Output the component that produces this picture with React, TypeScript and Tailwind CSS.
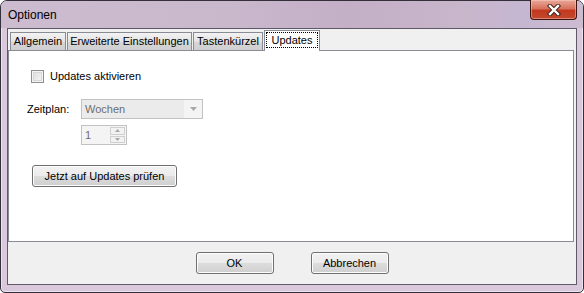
import React from 'react';

const font = "font-['Liberation_Sans',Arial,sans-serif]";

function WinButton({ children, className = '' }: { children: React.ReactNode; className?: string }) {
  return (
    <div
      className={`flex items-center justify-center rounded-[3px] border border-[#707070] bg-[linear-gradient(#f2f2f2_0%,#ebebeb_50%,#dddddd_50%,#cfcfcf_100%)] text-[11px] text-black shadow-[inset_0_0_0_1px_#fcfcfc] ${className}`}
    >
      {children}
    </div>
  );
}

function Tab({ label, width }: { label: string; width: number }) {
  return (
    <div
      style={{ width }}
      className="flex h-[18px] items-center justify-center border border-b-0 border-[#898c95] bg-[linear-gradient(#f3f3f3,#e3e3e3_50%,#d6d6d6_51%,#cfcfcf)] text-[11px] text-black"
    >
      {label}
    </div>
  );
}

function CloseButton() {
  return (
    <div className="-mt-[1px] flex h-[20px] w-[47px] items-center justify-center rounded-b-[4px] border border-t-0 border-[#3e1410] bg-[linear-gradient(#e9a99a_0%,#d7725c_45%,#c2391f_55%,#c4482c_100%)] shadow-[inset_0_0_0_1px_rgba(255,210,200,0.45)]">
      <svg width="14" height="12" viewBox="0 0 14 12">
        <path d="M3 2 L11 10 M11 2 L3 10" stroke="#40221c" strokeWidth="4.4" strokeLinecap="square" />
        <path d="M3 2 L11 10 M11 2 L3 10" stroke="#ffffff" strokeWidth="2.4" strokeLinecap="square" />
      </svg>
    </div>
  );
}

export default function App() {
  return (
    <div
      className={`${font} flex h-[293px] w-[584px] flex-col rounded-t-[7px] rounded-b-[5px] border border-[#34303a] bg-[#dac8dd] px-[6px] shadow-[inset_0_0_0_1px_#efe3f0]`}
    >
      {/* title bar */}
      <div className="-mx-[6px] flex h-[27px] shrink-0 items-start justify-between rounded-t-[6px] bg-[linear-gradient(90deg,#cdbbd0_0%,#c9b7cc_40%,#c3afc6_60%,#c8b6cb_80%,#c5b7d2_90%,#cdbbd0_100%)] px-[6px]">
        <span className="ml-[1px] mt-[7px] text-[12px] leading-[15px] text-black">Optionen</span>
        <CloseButton />
      </div>

      {/* client area */}
      <div className="flex h-[257px] shrink-0 flex-col border border-[#5f5866] bg-[#f0f0f0]">
        {/* tab strip */}
        <div className="relative z-10 flex h-[21px] shrink-0 items-end gap-[1px] pl-[2px]">
          <Tab label="Allgemein" width={56} />
          <Tab label="Erweiterte Einstellungen" width={125} />
          <Tab label="Tastenkürzel" width={70} />
          <div className="-mb-[1px] flex h-[21px] w-[56px] items-start border border-b-0 border-[#898c95] bg-white p-[1px]">
            <div className="flex h-[16px] w-full items-center justify-center border border-dotted border-black text-[11px] leading-none text-black">
              Updates
            </div>
          </div>
        </div>

        {/* tab panel */}
        <div className="mr-[2px] flex h-[192px] shrink-0 flex-col border border-[#898c95] bg-white pl-[18px] pt-[19px] text-[11px] text-black">
          <div className="ml-[4px] flex items-center gap-[6px]">
            <div className="h-[13px] w-[13px] border border-[#8e8f8f] bg-[linear-gradient(135deg,#dcdcdc,#f6f6f6)] shadow-[inset_0_0_0_1px_#f4f4f4,inset_0_0_0_2px_#d7d7d7]" />
            <span className="leading-[13px]">Updates aktivieren</span>
          </div>

          <div className="mt-[16px] flex items-center">
            <span className="w-[54px]">Zeitplan:</span>
            <div className="flex h-[20px] w-[122px] items-center border border-[#c2c2c2] bg-[#f4f4f4]">
              <div className="flex h-full flex-1 items-center bg-[#ebebeb] pl-[3px] text-[#6d6d6d]">Wochen</div>
              <div className="flex h-full w-[18px] items-center justify-center">
                <svg width="7" height="4" viewBox="0 0 7 4">
                  <path d="M0 0 H7 L3.5 4 Z" fill="#a8a8a8" />
                </svg>
              </div>
            </div>
          </div>

          <div className="ml-[54px] mt-[6px] flex h-[20px] w-[46px] items-center border border-[#c2c2c2] bg-[#f4f4f4] pl-[3px] text-[#6d6d6d]">
            <span className="flex-1">1</span>
            <div className="mr-[1px] flex h-[16px] w-[15px] flex-col gap-[1px]">
              <div className="flex flex-1 items-center justify-center border border-[#d0d0d0] bg-[#f2f2f2]">
                <svg width="5" height="3" viewBox="0 0 5 3">
                  <path d="M0 3 H5 L2.5 0 Z" fill="#a8a8a8" />
                </svg>
              </div>
              <div className="flex flex-1 items-center justify-center border border-[#d0d0d0] bg-[#f2f2f2]">
                <svg width="5" height="3" viewBox="0 0 5 3">
                  <path d="M0 0 H5 L2.5 3 Z" fill="#a8a8a8" />
                </svg>
              </div>
            </div>
          </div>

          <WinButton className="ml-[5px] mt-[20px] h-[22px] w-[145px]">Jetzt auf Updates prüfen</WinButton>
        </div>

        {/* bottom buttons */}
        <div className="flex flex-1 justify-center gap-[37px] pt-[10px]">
          <WinButton className="h-[22px] w-[78px]">OK</WinButton>
          <WinButton className="h-[22px] w-[78px]">Abbrechen</WinButton>
        </div>
      </div>
    </div>
  );
}
